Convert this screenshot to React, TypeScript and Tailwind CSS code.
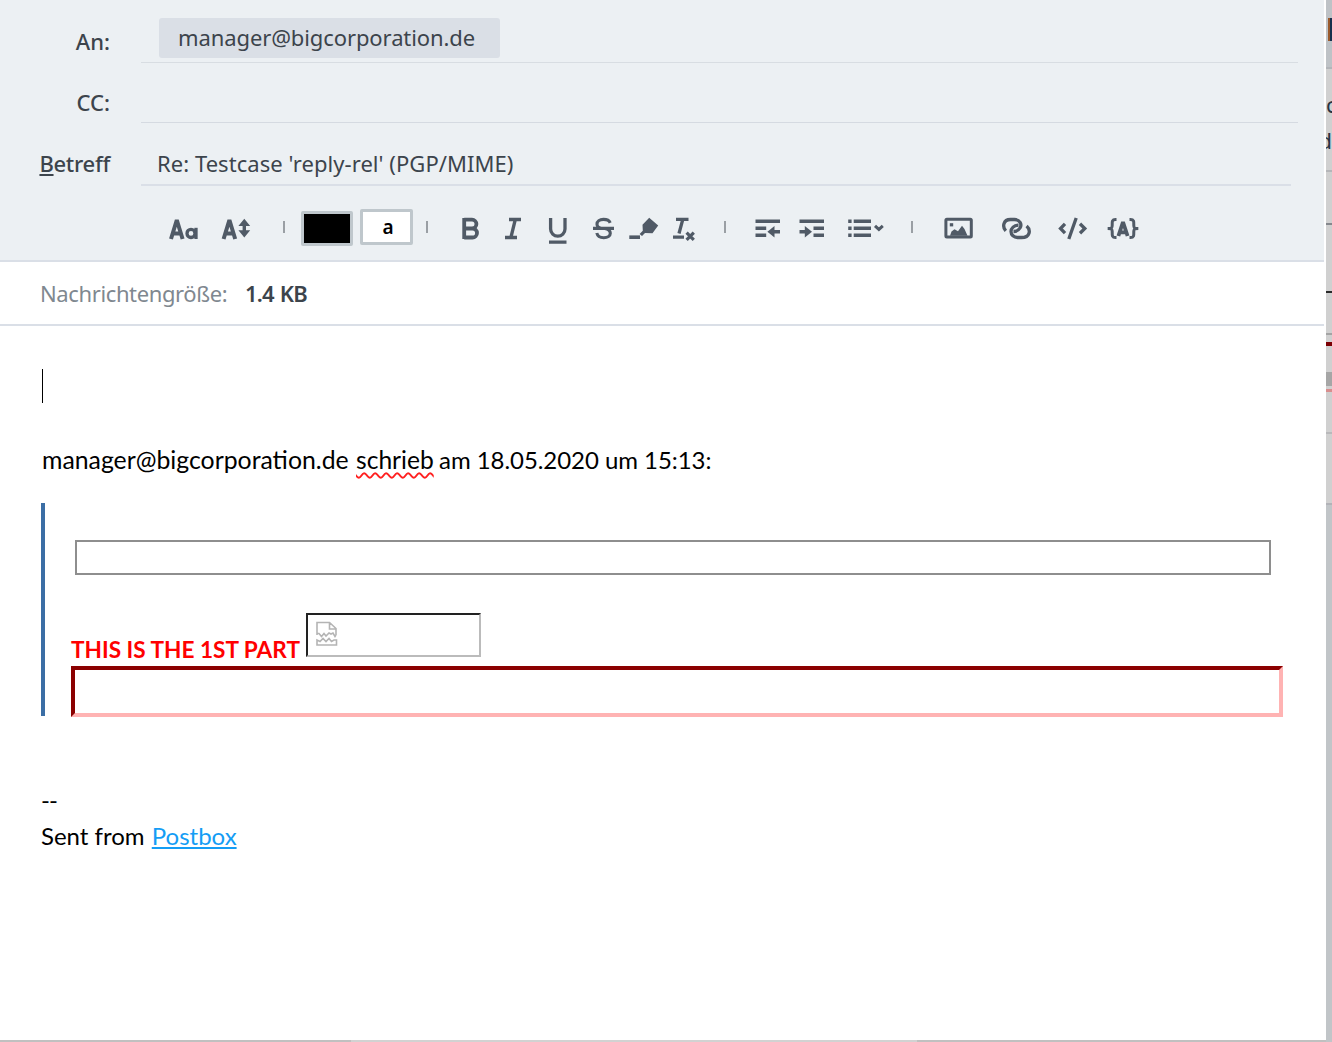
import type { ReactNode } from "react";

const INK = "#505a66";

function Icon({ x, w, className, children }: { x: number; w: number; className: string; children: ReactNode }) {
  return (
    <svg
      className={`shrink-0 ${className}`}
      width={w}
      height={36}
      viewBox={`${x} 210 ${w} 36`}
      fill="none"
      stroke={INK}
      strokeWidth={3}
    >
      {children}
    </svg>
  );
}

function Separator({ className }: { className: string }) {
  return <div className={`h-3 w-[2px] shrink-0 bg-[#9a9fa4] ${className}`} />;
}

function Toolbar() {
  return (
    <div className="flex h-[36px] items-start">
      <Icon x={168} w={31} className="ml-[168px]">
        <path d="M171 239 L176.8 220 L182.6 239 M172.5 233.4 H181" strokeWidth={4} strokeLinejoin="bevel" />
        <ellipse cx="191" cy="233.4" rx="4" ry="4.1" strokeWidth={3.3} />
        <path d="M196 227.8 V239" strokeWidth={3.3} />
      </Icon>
      <Icon x={220} w={31} className="ml-[21px]">
        <path d="M223.6 239 L229.4 220 L235.2 239 M225.4 233.4 H233.5" strokeWidth={4} strokeLinejoin="bevel" />
        <path d="M244.3 222 V234" strokeWidth={3.4} />
        <path d="M238.4 226 L244.3 218.8 L250.2 226 Z M238.4 230.2 L244.3 237.4 L250.2 230.2 Z" fill={INK} stroke="none" />
      </Icon>
      <Separator className="ml-[32px] mt-[11px]" />
      <div className="ml-[16px] mt-px h-[35px] w-[52px] shrink-0 rounded-[2px] border-[3px] border-[#bfc7cc] bg-black" />
      <div className="-mt-px ml-[7px] flex h-[36px] w-[53px] shrink-0 items-center justify-center rounded-[2px] border-[3px] border-[#bfc7cc] bg-white pl-[3px] font-['Noto_Sans'] text-[19px] font-semibold leading-none text-black">
        a
      </div>
      <Separator className="ml-[13px] mt-[11px]" />
      <Icon x={460} w={20} className="ml-[33px]">
        <path
          d="M463.2 219.7 H471 a4.4 4.4 0 0 1 0 8.8 H463.2 M471.5 228.5 a4.5 4.5 0 0 1 0 9 H463.2 M463.2 218 V239"
          strokeWidth={3.8}
        />
      </Icon>
      <Icon x={504} w={18} className="ml-[23px]">
        <path d="M509 219.5 H521 M505 237.5 H517 M515.3 219.5 L510.9 237.5" strokeWidth={3.3} />
      </Icon>
      <Icon x={548} w={21} className="ml-[26px]">
        <path d="M550.6 218 V229 a7 7 0 0 0 14.4 0 V218 M549 242.2 H566.5" strokeWidth={3.3} />
      </Icon>
      <Icon x={592} w={23} className="ml-[23px]">
        <path
          d="M610.2 222.8 C609.3 220.6 606.8 219.4 603.5 219.4 C599.5 219.4 597 221.4 597 224.2 C597 226.6 598.8 227.9 602 228.5 M593 228.4 H614 M605 228.5 C608.6 229.3 610.3 230.8 610.3 233.2 C610.3 236 607.6 237.7 603.8 237.7 C600 237.7 597.5 236 596.8 233"
          strokeWidth={3.1}
        />
      </Icon>
      <Icon x={628} w={31} className="ml-[13px]">
        <path d="M629.3 237.2 H640" strokeWidth={3.6} />
        <path
          d="M649.2 217.8 L658.2 225.6 L652.5 233.2 L645 233 L642 236 L639.6 234 L642.8 230.8 L642.5 224.8 Z"
          fill={INK}
          stroke="none"
        />
      </Icon>
      <Icon x={672} w={24} className="ml-[13px]">
        <path d="M676 219.4 H688.5 M673 237.2 H684 M682.8 219.4 L679 233.5" strokeWidth={3.3} />
        <path d="M686.6 232.6 L693.8 239.8 M693.8 232.6 L686.6 239.8" strokeWidth={3.2} />
      </Icon>
      <Separator className="ml-[28px] mt-[11px]" />
      <Icon x={754} w={27} className="ml-[28px]">
        <path d="M755.5 221.2 H780 M755.5 228.2 H766.2 M755.5 235.2 H766.2 M773 231.8 H780" strokeWidth={3.4} />
        <path d="M767.4 231.8 L774.5 226 V237.6 Z" fill={INK} stroke="none" />
      </Icon>
      <Icon x={798} w={27} className="ml-[17px]">
        <path d="M799.5 221.2 H824 M813.5 228.2 H824 M813.5 235.2 H824 M799.5 231.8 H806" strokeWidth={3.4} />
        <path d="M812 231.8 L804.8 226 V237.6 Z" fill={INK} stroke="none" />
      </Icon>
      <Icon x={847} w={38} className="ml-[22px]">
        <path
          d="M848.2 221.2 h3.4 M853.7 221.2 H871 M848.2 228.2 h3.4 M853.7 228.2 H871 M848.2 235.2 h3.4 M853.7 235.2 H871"
          strokeWidth={3.4}
        />
        <path d="M875 225.8 L878.9 229.4 L882.8 225.8" strokeWidth={3} />
      </Icon>
      <Separator className="ml-[26px] mt-[11px]" />
      <Icon x={943} w={31} className="ml-[30px]">
        <rect x="945.9" y="219.3" width="25.4" height="17.8" rx="1" strokeWidth={3} />
        <path d="M950 235.8 L951.5 231.5 L954.5 229.2 L958 231.2 L962 225.8 L964.5 229 L967.5 235.8 Z" fill={INK} stroke="none" />
        <rect x="949.8" y="223.2" width="3.4" height="3.2" fill={INK} stroke="none" />
      </Icon>
      <Icon x={1001} w={31} className="ml-[27px]">
        <path
          d="M1005.8 230.8 C1002.2 227 1003 219.5 1010.5 219.5 H1014.5 C1019.8 219.5 1022.3 224.2 1020 228 C1018.3 230.8 1015.5 231.5 1013.5 231.5"
          strokeWidth={3.3}
        />
        <path
          d="M1018.5 225.2 C1014 225.2 1011 228.2 1011 231.5 C1011 235 1014 237.5 1017.5 237.5 H1021.5 C1030.3 237.5 1031 229.8 1026.6 226"
          strokeWidth={3.3}
        />
      </Icon>
      <Icon x={1057} w={31} className="ml-[25px]">
        <path d="M1065 223.8 L1060.5 228.5 L1065 233.2 M1080 223.8 L1084.8 228.5 L1080 233.2 M1076.2 218 L1068.8 239" strokeWidth={3.3} />
      </Icon>
      <Icon x={1106} w={34} className="ml-[18px]">
        <path
          d="M1116.5 219.5 H1115.5 C1109.5 219.5 1114.2 226.5 1111 228.2 L1107.8 228.5 L1111 228.8 C1114.2 230.5 1109.5 237.5 1115.5 237.5 H1116.5"
          strokeWidth={3}
        />
        <path
          d="M1129.5 219.5 H1130.5 C1136.5 219.5 1131.8 226.5 1135 228.2 L1138.2 228.5 L1135 228.8 C1131.8 230.5 1136.5 237.5 1130.5 237.5 H1129.5"
          strokeWidth={3}
        />
        <path d="M1118.4 236 L1123 222 L1127.6 236 M1120 232.4 H1126" strokeWidth={3.8} strokeLinejoin="bevel" />
      </Icon>
    </div>
  );
}

function BrokenImage() {
  return (
    <svg width="24" height="26" viewBox="0 0 24 26" fill="none" stroke="#b4b4b4" strokeWidth="1.6">
      <path d="M2 14 V1.5 H14.5 L21 7.5 V14 M14.5 1.5 V8 H21 M2 12.5 L4 12.5 L6.5 15.5 L9 12.5 L11 15 L14 12 L16 13 L18 12 L20 15.5 L21 14" />
      <path d="M2 24 V19 L5 20.5 L8 17.5 L11 20.5 L14 17.5 L16.5 20.5 L19 19 H21.5 V24 Z" />
    </svg>
  );
}

/* Sliver of the window that lies behind the compose window. */
function BackgroundWindow() {
  return (
    <div className="flex w-[6px] shrink-0 flex-col overflow-hidden bg-[#d0d0d0]">
      <div className="h-[67px] shrink-0 bg-[#bec2c6] pl-[2px] pt-[18px]">
        <div className="h-[23px] border-l-2 border-[#9a5a2c] bg-[#17304d]" />
      </div>
      <div className="h-[2px] shrink-0 bg-[#b2b5b9]" />
      <div className="h-[101px] shrink-0 pt-[17px] leading-[36px] text-[#2a3442]">
        <div className="h-[36px] w-[6px] overflow-hidden">c</div>
        <div className="flex h-[36px] w-[6px] justify-end overflow-hidden">d</div>
      </div>
      <div className="h-[2px] shrink-0 bg-[#b5b6b9]" />
      <div className="mt-[51px] h-[2px] shrink-0 bg-[#85888d]" />
      <div className="mt-[66px] h-[2px] shrink-0 bg-[#2a2a2a]" />
      <div className="mt-[40px] h-[2px] shrink-0 bg-[#a4a4a4]" />
      <div className="mt-[7px] h-[4px] shrink-0 bg-[#7c0004]" />
      <div className="mt-[26px] h-[14px] shrink-0 bg-[#a6a6a6]" />
      <div className="mt-[3px] h-[3px] shrink-0 bg-[#d88e8e]" />
      <div className="mt-[40px] h-[2px] shrink-0 bg-[#b9b9bb]" />
      <div className="mt-[69px] h-[2px] shrink-0 bg-[#b2b3b8]" />
      <div className="flex-1 bg-[#c1c5c8]" />
    </div>
  );
}

export default function App() {
  return (
    <div className="flex h-[1042px] w-[1332px] overflow-hidden bg-white font-['Noto_Sans',sans-serif] text-[22px] leading-[30px] text-[#3c444c]">
      <div className="flex w-[1326px] shrink-0 flex-col">
        <header className="mr-[2px] h-[262px] shrink-0 border-b-2 border-[#dadfe7] bg-[#ecf0f3]">
          <div className="flex h-[63px]">
            <span className="w-[110px] pt-[26px] text-right font-medium">An:</span>
            <div className="ml-[31px] w-[1157px] border-b border-[#d8dde2] pl-[18px] pt-[18px]">
              <span className="flex h-[40px] w-[341px] items-center rounded-[3px] bg-[#dadfe6] pb-[2px] pl-[19px] tracking-[-0.1px]">
                manager@bigcorporation.de
              </span>
            </div>
          </div>
          <div className="flex h-[60px]">
            <span className="w-[110px] pt-[24px] text-right font-medium">CC:</span>
            <div className="ml-[31px] w-[1157px] border-b border-[#d5dae1]" />
          </div>
          <div className="flex h-[63px]">
            <span className="w-[110px] pt-[25px] text-right font-medium tracking-[-0.3px]">
              <span className="underline">B</span>etreff
            </span>
            <div className="ml-[31px] w-[1150px] border-b-2 border-[#dadfe7] pl-[16px] pt-[25px] tracking-[0.05px]">
              Re: Testcase 'reply-rel' (PGP/MIME)
            </div>
          </div>
          <div className="pt-[24px]">
            <Toolbar />
          </div>
        </header>
        <div className="mr-[2px] flex h-[64px] shrink-0 border-b-2 border-[#dadfe7] pl-[40px] pt-[16px]">
          <span className="w-[205px] tracking-[-0.38px] text-[#7f8890]">Nachrichtengröße:</span>
          <span className="font-semibold tracking-[-0.8px] [word-spacing:1px]">1.4 KB</span>
        </div>
        <main className="flex flex-1 flex-col pl-[41px] font-['Lato',sans-serif] text-[24px] text-black">
          <div className="ml-px mt-[43px] h-[34px] w-px shrink-0 bg-black" />
          <p className="mt-[42px] flex h-[30px] shrink-0 items-baseline pl-px">
            <span className="w-[314px] text-[24.8px]">manager@bigcorporation.de</span>
            <span className="w-[83px]">
              <span className="text-[24.6px] underline decoration-[#ff2020] decoration-wavy decoration-[1.5px] underline-offset-[3px]">
                schrieb
              </span>
            </span>
            <span className="tracking-[-0.05px]">am 18.05.2020 um 15:13:</span>
          </p>
          <blockquote className="mt-[28px] flex h-[213px] w-[1242px] shrink-0 flex-col border-l-4 border-[#3b6ea5] pl-[26px]">
            <div className="ml-[4px] mt-[37px] h-[35px] w-[1196px] shrink-0 border-2 border-[#8e8e8e]" />
            <div className="mt-[38px] flex h-[44px] shrink-0 items-end">
              <b className="-mb-[8px] w-[235px] text-[22.6px] text-[#ff0000]">THIS IS THE 1ST PART</b>
              <div className="h-[44px] w-[175px] border-2 border-b-[#bbb] border-l-[#222] border-r-[#bbb] border-t-[#222] pl-[7px] pt-[6px]">
                <BrokenImage />
              </div>
            </div>
            <div className="mt-[9px] h-[51px] w-[1212px] shrink-0 border-4 border-b-[#ffb3b3] border-l-[#8b0000] border-r-[#ffb3b3] border-t-[#8b0000]" />
          </blockquote>
          <p className="mt-[69px] tracking-[-1px]">--</p>
          <p className="mt-[6px]">
            Sent from <a className="ml-px text-[#149df5] underline">Postbox</a>
          </p>
          <div className="-ml-[41px] mt-auto flex h-[2px] shrink-0 bg-[#d2d2d2]">
            <div className="w-[351px] bg-[#c0c0c0]" />
            <div className="ml-auto w-[409px] bg-[#c0c0c0]" />
          </div>
        </main>
      </div>
      <BackgroundWindow />
    </div>
  );
}
